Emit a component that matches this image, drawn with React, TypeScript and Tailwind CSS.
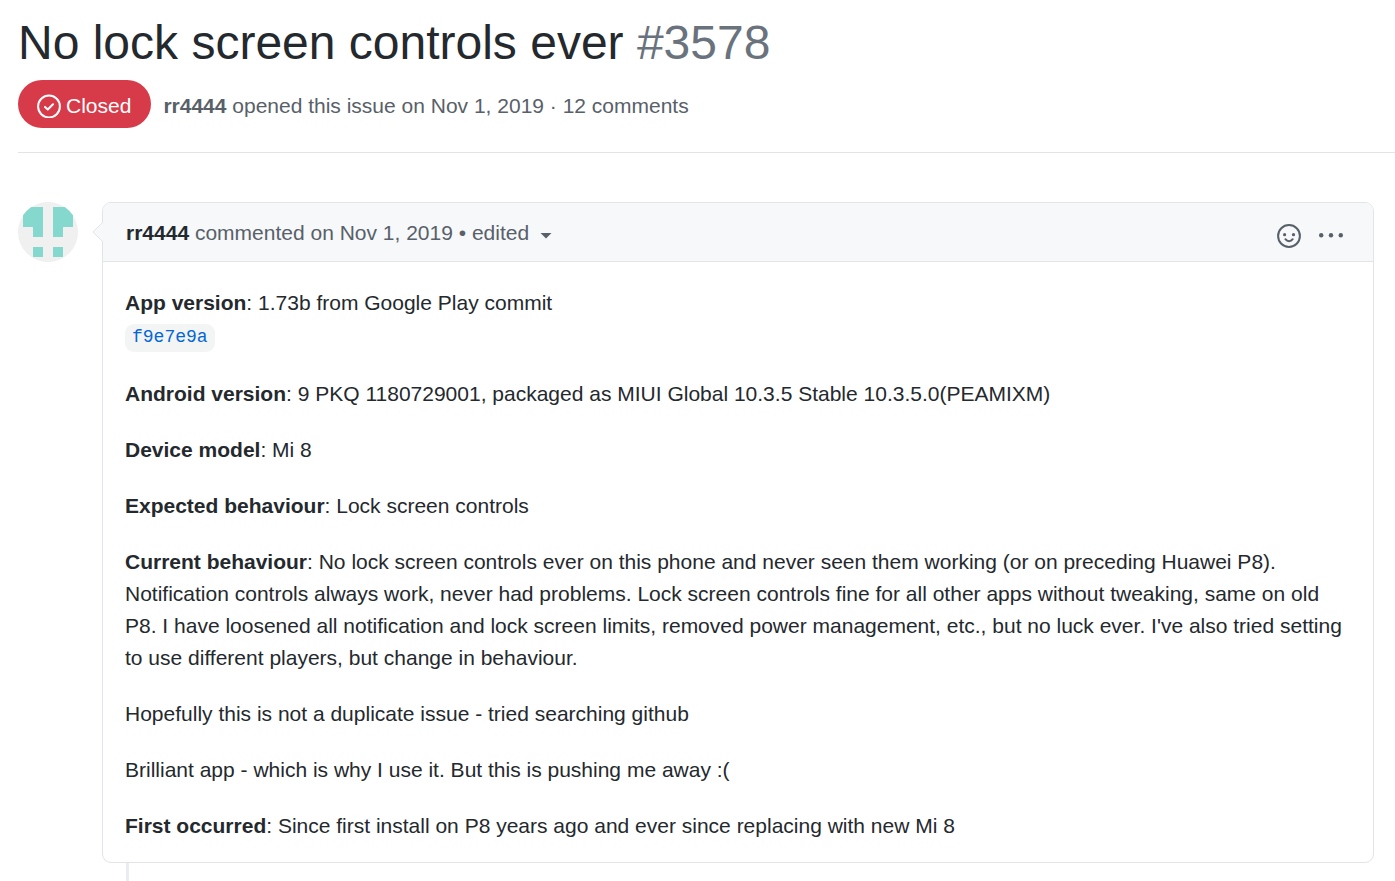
import type { ReactNode } from "react";

function ClosedIcon() {
  return (
    <svg className="mt-1 size-6 shrink-0" viewBox="0 0 24 24" fill="none" stroke="currentColor" strokeWidth="2" aria-hidden="true">
      <circle cx="12" cy="12.5" r="10.9" />
      <path d="M8 12.9l2.8 2.6 5.2-5.2" strokeLinecap="round" strokeLinejoin="round" />
    </svg>
  );
}

function SmileyIcon() {
  return (
    <svg className="size-6" viewBox="0 0 24 24" fill="none" stroke="currentColor" strokeWidth="2" aria-hidden="true">
      <circle cx="12" cy="12" r="10.9" />
      <circle cx="7.6" cy="10.7" r="1.6" fill="currentColor" stroke="none" />
      <circle cx="16.5" cy="10.7" r="1.6" fill="currentColor" stroke="none" />
      <path d="M8.4 15.2c2 2.6 5.3 2.6 7.3 0" strokeLinecap="round" />
    </svg>
  );
}

function KebabIcon() {
  return (
    <svg className="size-6" viewBox="0 0 24 24" fill="currentColor" aria-hidden="true">
      <circle cx="2.2" cy="11.3" r="2.2" />
      <circle cx="12" cy="11.3" r="2.2" />
      <circle cx="21.8" cy="11.3" r="2.2" />
    </svg>
  );
}

function Avatar() {
  return (
    <svg className="size-[60px] shrink-0 rounded-full bg-[#f0f0f0]" viewBox="0 0 60 60" fill="#85d8ce" shapeRendering="crispEdges" role="img" aria-label="rr4444">
      <path d="M5 5h20v30H15V25H5zM35 5h20v20H45v10H35zM15 45h10v10H15zM35 45h10v10H35z" />
    </svg>
  );
}

function Field({ label, children }: { label: string; children: ReactNode }) {
  return (
    <p>
      <strong className="font-bold">{label}</strong>: {children}
    </p>
  );
}

export default function App() {
  return (
    <main className="min-h-screen bg-white pl-[18px] pt-4 font-['Liberation_Sans',Arial,sans-serif] text-[21px] leading-8 text-[#24292e]">
      <header className="border-b border-[#e1e4e8] pb-6">
        <h1 className="text-5xl leading-[54px]">
          No lock screen controls ever <span className="text-[#6a737d]">#3578</span>
        </h1>
        <div className="mt-[10px] flex items-center gap-3 text-[#586069]">
          <span className="flex h-12 items-center gap-[5px] rounded-full bg-[#d73a49] pl-[19px] pr-5 text-white">
            <ClosedIcon />
            <span className="pt-1">Closed</span>
          </span>
          <p className="pt-1">
            <a href="#rr4444" className="font-bold">rr4444</a> opened this issue on Nov 1, 2019 · 12 comments
          </p>
        </div>
      </header>

      <div className="mt-[49px] flex items-start gap-6 pr-[21px]">
        <Avatar />
        <div className="min-w-0 flex-1">
          <article className="relative rounded-[9px] border border-[#e1e4e8]">
            <svg className="absolute -left-[11px] top-[17px] h-6 w-3" viewBox="0 0 12 24" aria-hidden="true">
              <path d="M12 1L1 12l11 11z" fill="#f6f8fa" />
              <path d="M11 2L1 12l10 10" fill="none" stroke="#e1e4e8" />
            </svg>
            <div className="flex h-[59px] items-center rounded-t-lg border-b border-[#e1e4e8] bg-[#f6f8fa] pl-[23px] pr-[30px] text-[#586069]">
              <h2 className="flex-1 pt-0.5">
                <a href="#rr4444" className="font-bold text-[#24292e]">rr4444</a> commented on Nov 1, 2019 •{" "}
                <button type="button">
                  edited
                  <svg className="ml-[11px] inline h-2.5 w-3" viewBox="0 0 12 10" fill="currentColor" aria-hidden="true">
                    <path d="M0.5 4h11L6 9.5z" />
                  </svg>
                </button>
              </h2>
              <div className="flex gap-[18px] pt-2">
                <button type="button" aria-label="Add reaction"><SmileyIcon /></button>
                <button type="button" aria-label="Show options"><KebabIcon /></button>
              </div>
            </div>
            <div className="flex flex-col gap-6 px-[22px] pb-5 pt-[25px]">
              <div>
                <Field label="App version">1.73b from Google Play commit</Field>
                <div className="flex pb-0.5 pt-[5px]">
                  <a href="#f9e7e9a" className="h-7 rounded-[9px] bg-[#f3f4f4] px-[7px] font-['Liberation_Mono',monospace] text-lg leading-[26px] text-[#0366d6]">
                    f9e7e9a
                  </a>
                </div>
              </div>
              <Field label="Android version">
                9 PKQ 1180729001, packaged as MIUI Global 10.3.5 Stable 10.3.5.0(PEAMIXM)
              </Field>
              <Field label="Device model">Mi 8</Field>
              <Field label="Expected behaviour">Lock screen controls</Field>
              <Field label="Current behaviour">
                No lock screen controls ever on this phone and never seen them working (or on preceding Huawei P8).
                Notification controls always work, never had problems. Lock screen controls fine for all other apps
                without tweaking, same on old P8. I have loosened all notification and lock screen limits, removed power
                management, etc., but no luck ever. I've also tried setting to use different players, but change in
                behaviour.
              </Field>
              <p>Hopefully this is not a duplicate issue - tried searching github</p>
              <p>Brilliant app - which is why I use it. But this is pushing me away :(</p>
              <Field label="First occurred">Since first install on P8 years ago and ever since replacing with new Mi 8</Field>
            </div>
          </article>
          <div className="ml-6 h-[18px] w-[3px] bg-[#eaecef]" />
        </div>
      </div>
    </main>
  );
}
